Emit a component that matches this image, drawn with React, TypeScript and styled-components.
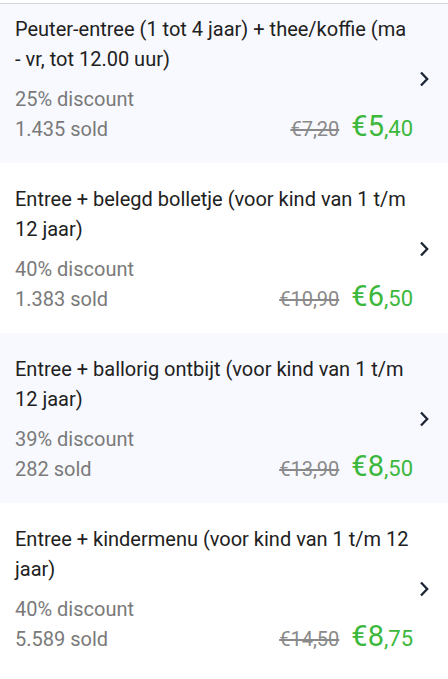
import React from 'react'
import styled, { createGlobalStyle } from 'styled-components'

const GlobalStyle = createGlobalStyle`
  html, body {
    margin: 0;
    padding: 0;
    background: #ffffff;
    font-family: Roboto, "Noto Sans", "Liberation Sans", sans-serif;
  }
`

const Page = styled.div`
  width: 448px;
  height: 679px;
  padding-top: 3px;
  box-sizing: border-box;
  display: flex;
  flex-direction: column;
`

const Viewport = styled.div`
  flex: 1;
  overflow: hidden;
  border-top: 1px solid #d6d6d6;
`

// list is scrolled a little, the first card's top is hidden
const DealList = styled.ul`
  list-style: none;
  margin: -11px 0 0;
  padding: 0;
`

const DealItem = styled.li<{ $shaded: boolean }>`
  display: flex;
  align-items: center;
  padding: 21px 19px 19px 15px;
  background: ${(p) => (p.$shaded ? '#f8f9fe' : '#ffffff')};
`

const DealBody = styled.div`
  flex: 1;
  min-width: 0;
  display: flex;
  flex-direction: column;
`

const DealTitle = styled.div`
  font-size: 20px;
  line-height: 30px;
  color: #212121;
  margin-bottom: 10px;
`

const MetaText = styled.div`
  font-size: 20px;
  line-height: 30px;
  color: #7a7a7a;
`

const BottomRow = styled.div`
  display: flex;
  justify-content: space-between;
  align-items: baseline;
  height: 30px;
`

// line-height 0 so the big price sits on the "sold" baseline without growing the row
const Prices = styled.div`
  display: flex;
  align-items: baseline;
  gap: 12px;
  line-height: 0;
`

const OldPrice = styled.span`
  font-size: 20px;
  color: #8a8a8a;
  text-decoration: line-through;
`

const NewPrice = styled.span`
  color: #3cb83c;
`

const PriceMain = styled.span`
  font-size: 29px;
`

const PriceCents = styled.span`
  font-size: 22px;
`

const ChevronBox = styled.div`
  margin-left: 6px;
  width: 10px;
  display: flex;
  align-items: center;
`

const Chevron = () => (
  <svg width="10" height="16" viewBox="0 0 10 16">
    <path d="M2 1.5 L8.2 8 L2 14.5" fill="none" stroke="#1c2533" strokeWidth="2.3" />
  </svg>
)

const deals = [
  { title: 'Peuter-entree (1 tot 4 jaar) + thee/koffie (ma - vr, tot 12.00 uur)', discount: 25, sold: '1.435', old: '€7,20', euros: '€5', cents: ',40' },
  { title: 'Entree + belegd bolletje (voor kind van 1 t/m 12 jaar)', discount: 40, sold: '1.383', old: '€10,90', euros: '€6', cents: ',50' },
  { title: 'Entree + ballorig ontbijt (voor kind van 1 t/m 12 jaar)', discount: 39, sold: '282', old: '€13,90', euros: '€8', cents: ',50' },
  { title: 'Entree + kindermenu (voor kind van 1 t/m 12 jaar)', discount: 40, sold: '5.589', old: '€14,50', euros: '€8', cents: ',75' },
]

const App = () => {
  return (
    <>
      <GlobalStyle />
      <Page>
        <Viewport>
          <DealList>
            {deals.map((deal, i) => (
              <DealItem key={deal.title} $shaded={i % 2 === 0}>
                <DealBody>
                  <DealTitle>{deal.title}</DealTitle>
                  <MetaText>{deal.discount}% discount</MetaText>
                  <BottomRow>
                    <MetaText>{deal.sold} sold</MetaText>
                    <Prices>
                      <OldPrice>{deal.old}</OldPrice>
                      <NewPrice>
                        <PriceMain>{deal.euros}</PriceMain>
                        <PriceCents>{deal.cents}</PriceCents>
                      </NewPrice>
                    </Prices>
                  </BottomRow>
                </DealBody>
                <ChevronBox>
                  <Chevron />
                </ChevronBox>
              </DealItem>
            ))}
          </DealList>
        </Viewport>
      </Page>
    </>
  )
}

export default App
